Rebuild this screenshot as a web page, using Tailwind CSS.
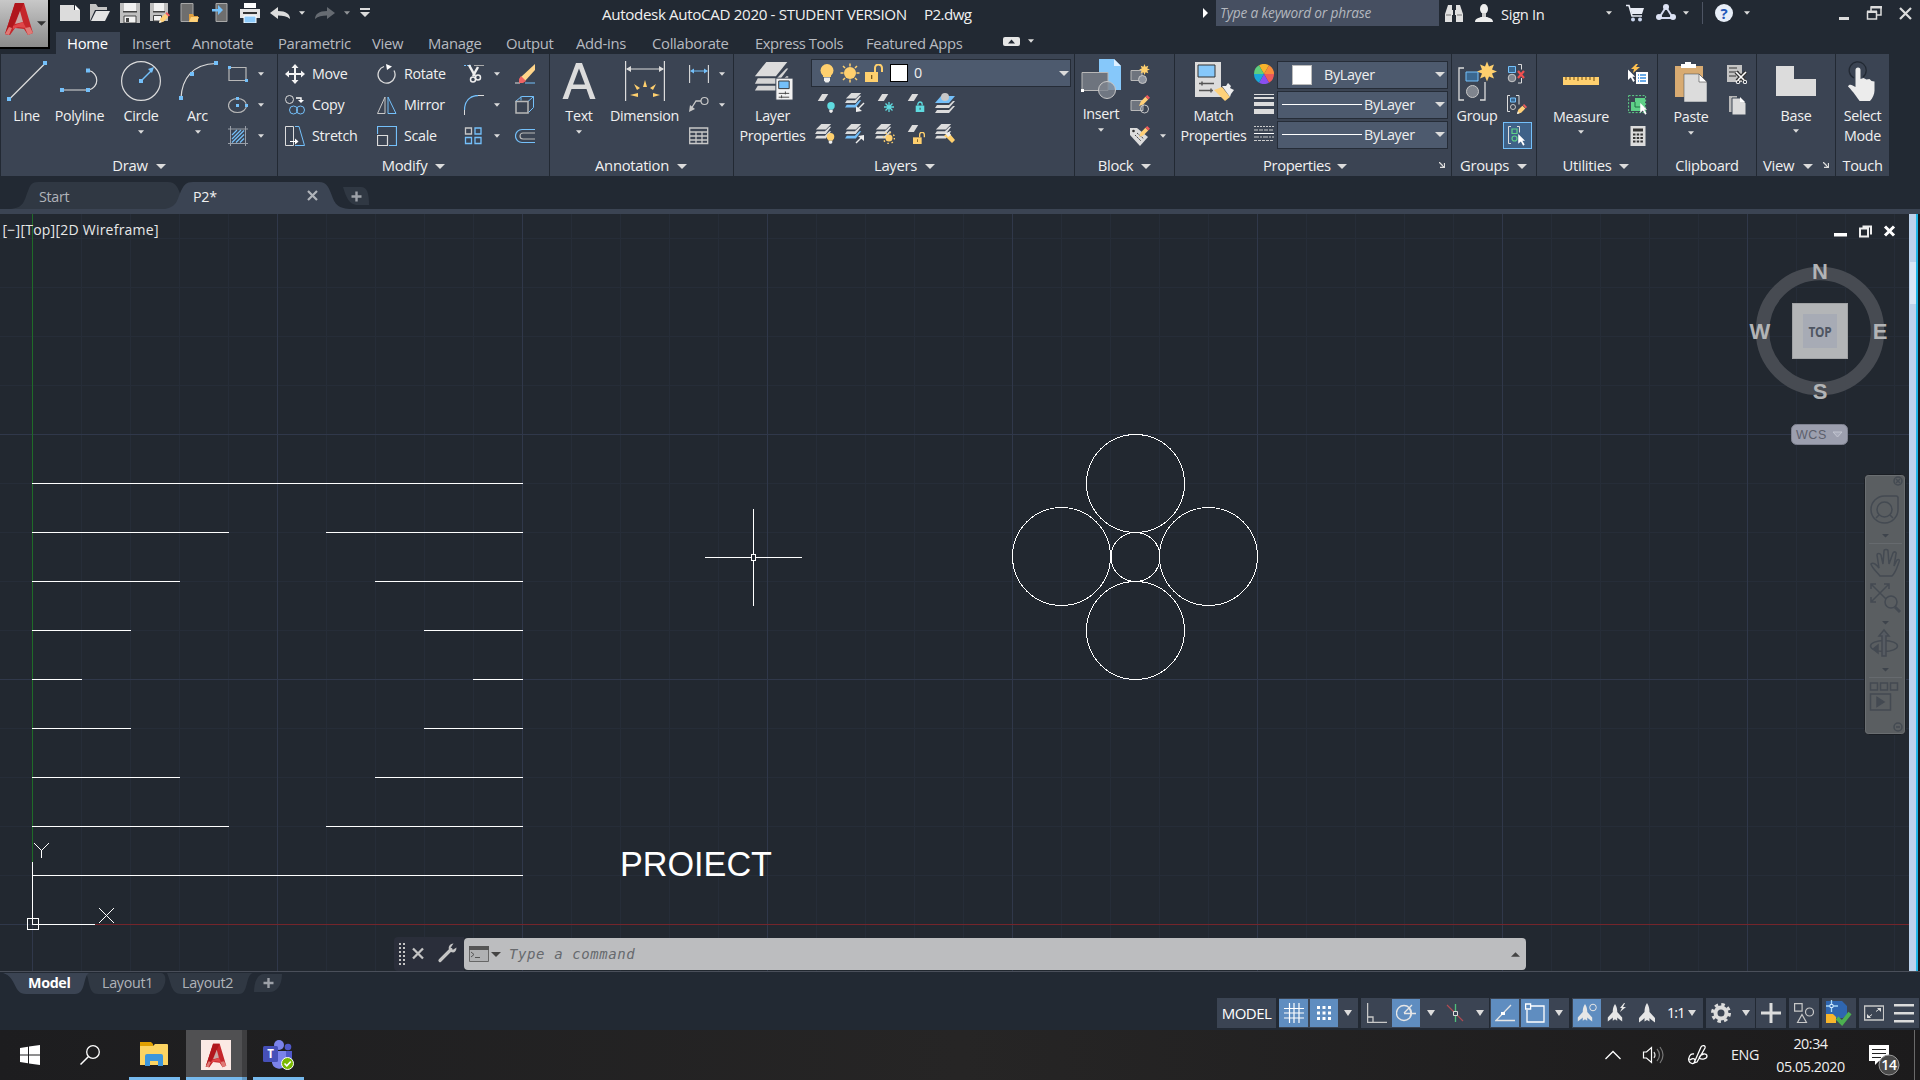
<!DOCTYPE html>
<html lang="en">
<head>
<meta charset="utf-8">
<title>Autodesk AutoCAD 2020</title>
<script src="https://cdn.jsdelivr.net/npm/@tailwindcss/browser@4"></script>
</head>
<body class="w-[1920px] h-[1080px] overflow-hidden bg-[#222933] font-['Open_Sans',sans-serif] text-[14.3px] leading-5 tracking-[-0.3px] text-[#f0f0f0] flex flex-col">

<svg class="hidden">
  <defs>
    <symbol id="dn" viewBox="0 0 6 4"><path d="M0 0.3h6L3 3.7z" fill="#dcdcdc"/></symbol>
    <symbol id="dnl" viewBox="0 0 10 5"><path d="M0 0h10L5 5z" fill="#dcdcdc"/></symbol>
    <symbol id="corner" viewBox="0 0 6 6"><path d="M0 0l5 5M5.500 1v4.500H1" fill="none" stroke="#dcdcdc" stroke-width="1.3"/></symbol>
    <symbol id="sheet" viewBox="0 0 12 8"><path d="M5 0h7L7 8H0z" fill="#dcdcdc"/></symbol>
    <symbol id="stack" viewBox="0 0 20 20"><path d="M7 0h11l-6 6H1z" fill="#dcdcdc"/><path d="M2 8h9l5-5h2l-6 8H0zM2 13h9l5-5h2l-6 8H0z" fill="#dcdcdc"/></symbol>
    <symbol id="stackb" viewBox="0 0 20 20"><path d="M7 0h11l-6 6H1z" fill="#dcdcdc"/><path d="M2 8h9l5-5h2l-6 8H0z" fill="#dcdcdc"/><path d="M2 13h9l5-5h2l-6 8H0z" fill="#74c0fa"/></symbol>
    <symbol id="bulb" viewBox="0 0 14 19"><circle cx="7" cy="6.5" r="6.5" fill="currentColor"/><path d="M3 10h8v3H3z" fill="currentColor"/><path d="M4 13.5h6v3L8.500 18.500h-3L4 16.500z" fill="#eee"/></symbol>
    <symbol id="lock" viewBox="0 0 14 14"><path d="M1 5h12v9H1z" fill="currentColor"/><path d="M4 5V3a3 3 0 0 1 6 0v2" fill="none" stroke="currentColor" stroke-width="1.800"/><path d="M6.500 8h1.200v3H6.500z" fill="#333"/></symbol>
    <symbol id="unlock" viewBox="0 0 18 18"><path d="M0 8h13v10H0z" fill="#ffd06e"/><path d="M10 8V4a3 3 0 0 1 7 0v4" fill="none" stroke="#ffd06e" stroke-width="2"/><path d="M6 11h1.300v4H6z" fill="#7a5b20"/></symbol>
    <symbol id="pencil" viewBox="0 0 12 12"><path d="M0 12l2-5 5-5 3 3-5 5z" fill="#ffd078"/><path d="M7 2l2-2 3 3-2 2z" fill="#f05a5a"/></symbol>
    <symbol id="pencild" viewBox="0 0 12 12"><path d="M0 12l1.500-5 5-5 3.500 3.500-5 5z" fill="#ffd078"/><path d="M0 12l1-3 2 2z" fill="#f4f4f4"/><path d="M7 1.500L8.500 0 12 3.500 10.500 5z" fill="#f05a5a"/></symbol>
    <symbol id="star" viewBox="-10 -10 20 20"><path d="M0-10l2 5 5-2-2 5 5 2-5 2 2 5-5-2-2 5-2-5-5 2 2-5-5-2 5-2-2-5 5 2z" fill="#ffd06e"/></symbol>
    <symbol id="cursor" viewBox="0 0 10 16"><path d="M0 0l9 9H5.500l3 5-2 1.500-3-5.500L0 13z" fill="#fff"/></symbol>
    <symbol id="annot" viewBox="0 0 20 20"><path d="M10 0c2 3 2.500 6 2.500 9l5.500 6v4.500l-4-3-1.500-1.500v3.500L10 17l-2.500 1.500V15L6 16.500l-4 3V15l5.500-6C7.500 6 8 3 10 0z" fill="#e6e6e6"/></symbol>
    <symbol id="alogo" viewBox="0 0 30 34"><path d="M11 1h9l9 30-5 2-4-6-9-1-5 7-5-1z" fill="#c5262b"/><path d="M11 1h9l-5 11-6 12-4 9-4-1z" fill="#b0161c"/><path d="M11 22l5-13 3 11z" fill="#c9a9a6"/><path d="M9 24l10-4 3 6-8-1-5 2z" fill="#e0474a"/><path d="M1 32l4-7 3 1-3 7zM24 33l-3-7 5-1 3 6z" fill="#e07a76"/></symbol>
  </defs>
</svg>

<!-- Title bar and ribbon tabs -->
<header class="h-[54px] flex shrink-0">
  <div class="w-[50px] h-[49px] shrink-0 border-r-2 border-b-2 border-black bg-linear-to-b from-[#c8c8c8] to-[#8b8b8b] flex items-center">
    <svg class="w-[30px] h-[34px] ml-1 -mt-[10px]"><use href="#alogo"/></svg>
    <svg class="w-[9px] h-[5px] ml-[3px]" viewBox="0 0 10 5"><path d="M0 0h10L5 5z" fill="#333"/></svg>
  </div>
  <div class="flex-1 flex flex-col">
    <div class="h-8 flex">
      <div class="flex w-[552px] pl-[10px] pt-[3px]">
        <svg class="w-5 h-5 mr-[10px]" viewBox="0 0 20 20"><path d="M0 2h14v5h6v11H0z" fill="#dcdcdc"/><path d="M15 2l5 5h-5z" fill="#fff"/></svg>
        <svg class="w-5 h-5 mr-[10px]" viewBox="0 0 20 20"><path d="M0 1h6l2 3h9v3H5L0 18z" fill="#c4c4c4"/><path d="M6 8h14l-5 10H1z" fill="#e4e4e4"/></svg>
        <svg class="w-5 h-5 mr-[10px]" viewBox="0 0 20 20"><path d="M0 0h20v20H0z" fill="#bfbfbf"/><path d="M4 0h12v8H4z" fill="#f2f2f2"/><path d="M3 8h14v1.500H3z" fill="#444"/><path d="M4 13h12v7H4z" fill="#f2f2f2" stroke="#444"/><path d="M6 15h3v4H6z" fill="#444"/></svg>
        <svg class="w-5 h-5 mr-[10px]" viewBox="0 0 20 20"><path d="M0 0h18v18H0z" fill="#bfbfbf"/><path d="M4 0h10v8H4z" fill="#f2f2f2"/><path d="M3 8h12v1.500H3z" fill="#444"/><path d="M3.500 12.500h8v5.500h-8z" fill="#f2f2f2" stroke="#444"/><use href="#pencild" x="9" y="9" width="11" height="11"/></svg>
        <svg class="w-5 h-5 mr-[10px]" viewBox="0 0 20 20"><path d="M1 .5h12v18H1z" fill="#6e6e6e" stroke="#a8a8a8"/><path d="M9 11h4l1 2h4v6H9z" fill="#e0a040"/><path d="M11 14h8l-2 5H9z" fill="#ffd27a"/></svg>
        <svg class="w-5 h-5 mr-[10px]" viewBox="0 0 20 20"><path d="M6 .5h11v18H6z" fill="#6e6e6e" stroke="#a8a8a8"/><path d="M2 6h6V2l5 5-5 5V8.500H2z" fill="#74c0fa"/></svg>
        <svg class="w-5 h-5 mr-[10px]" viewBox="0 0 20 20"><path d="M4 0h12v5H4z" fill="#fff"/><path d="M0 6h20v9H0z" fill="#e4e4e4"/><path d="M3 9h14v2H3z" fill="#333"/><path d="M4 13h12v7H4z" fill="#8ecbfb" stroke="#fff"/></svg>
        <svg class="w-5 h-5 mr-[9px]" viewBox="0 0 20 20"><path d="M0 10l8-6v4c8 0 12 3 12 8-3-3-7-3.500-12-3.500V16z" fill="#dcdcdc"/></svg>
        <svg class="w-[6px] h-1 mt-2 mr-[10px]"><use href="#dn"/></svg>
        <svg class="w-5 h-5 mr-[9px]" viewBox="0 0 20 20"><path d="M20 10l-8-6v4C4 8 0 11 0 16c3-3 7-3.500 12-3.500V16z" fill="#666b72"/></svg>
        <svg class="w-[6px] h-1 mt-2 mr-[10px] opacity-60"><use href="#dn"/></svg>
        <svg class="w-[10px] h-[9px] mt-[5px]" viewBox="0 0 10 9"><path d="M0 0h10v2H0zM0 4h10L5 9z" fill="#dcdcdc"/></svg>
      </div>
      <div class="w-[322px] pt-1 text-[15.200px] tracking-[-0.37px] whitespace-nowrap">Autodesk AutoCAD 2020 - STUDENT VERSION</div>
      <div class="w-[279px] pt-1 text-[15.200px] tracking-[-0.600px]">P2.dwg</div>
      <svg class="w-[5px] h-[10px] mt-2 mr-2" viewBox="0 0 5 10"><path d="M0 0l5 5-5 5z" fill="#fff"/></svg>
      <div class="w-[223px] h-[26px] bg-[#464f61] italic text-[13.700px] text-[#b4b8bf] pl-1 pt-[3px] tracking-[-0.17px] whitespace-nowrap">Type a keyword or phrase</div>
      <div class="flex pt-1">
        <svg class="w-[18px] h-[18px] ml-[6px]" viewBox="0 0 18 18"><path d="M3 1h4v5h1v5H7v7H0v-8zM15 1h-4v5h-1v5h1v7h7v-8z" fill="#e0e0e0"/><path d="M1 11h5M12 11h5" stroke="#777"/></svg>
        <svg class="w-[18px] h-[18px] ml-3" viewBox="0 0 18 18"><ellipse cx="9" cy="5" rx="4" ry="5" fill="#eee"/><path d="M7 9h4v4H7z" fill="#ccc"/><path d="M0 18c0-4 4-4 6-5h6c2 1 6 1 6 5z" fill="#eee"/></svg>
        <div class="ml-2 w-[105px] text-[14.700px]">Sign In</div>
        <svg class="w-[6px] h-1 mt-[7px]"><use href="#dn"/></svg>
        <svg class="w-[19px] h-[18px] ml-[14px]" viewBox="0 0 19 18"><path d="M0 1.500h3L6 12h10" fill="none" stroke="#e8ecf5" stroke-width="1.600"/><path d="M4 4h14l-2 6H6z" fill="#e8ecf5"/><circle cx="7" cy="15.500" r="2" fill="#cdd8f0"/><circle cx="14" cy="15.500" r="2" fill="#cdd8f0"/></svg>
        <svg class="w-5 h-[18px] ml-[11px]" viewBox="0 0 20 18"><path d="M10 3L3 14h14z" fill="none" stroke="#d5daf0" stroke-width="2"/><circle cx="10" cy="3" r="3" fill="#dde3f5"/><circle cx="3" cy="13" r="3" fill="#dde3f5"/><circle cx="17" cy="13" r="3" fill="#dde3f5"/></svg>
        <svg class="w-[6px] h-1 mt-[7px] ml-[7px]"><use href="#dn"/></svg>
        <div class="w-px h-[22px] -mt-[2px] ml-[13px] bg-[#4d5463]"></div>
        <div class="size-[18px] ml-3 rounded-full bg-[#e8eef8] text-[#2458b8] font-bold text-[15px] leading-[18px] text-center">?</div>
        <svg class="w-[6px] h-1 mt-[7px] ml-[11px]"><use href="#dn"/></svg>
        <svg class="w-[75px] h-5 ml-[89px]" viewBox="1840 4 75 20"><path d="M1840 17h10v3h-10z" fill="#dcdcdc"/><path d="M1868.500 12h9v7h-9zM1872 11V7h10v8h-4" fill="none" stroke="#dcdcdc" stroke-width="1.500"/><path d="M1868 10.500h10v2.500h-10zM1872 6h11v2.500h-11z" fill="#dcdcdc"/><path d="M1901 8l11 11M1912 8l-11 11" stroke="#dcdcdc" stroke-width="2.200"/></svg>
      </div>
    </div>
    <nav class="h-[22px] flex gap-6 pl-[6px] text-[#b7bac0] leading-[22px] whitespace-nowrap text-[14.800px] tracking-[-0.28px]">
      <div class="w-16 h-[22px] bg-[#3b4453] text-white pl-[11px] -mr-3">Home</div>
      <div class="w-9">Insert</div>
      <div class="w-[62px]">Annotate</div>
      <div class="w-[70px]">Parametric</div>
      <div class="w-8">View</div>
      <div class="w-[54px]">Manage</div>
      <div class="w-[46px]">Output</div>
      <div class="w-[52px]">Add-ins</div>
      <div class="w-[79px]">Collaborate</div>
      <div class="w-[87px] tracking-[-0.45px]">Express Tools</div>
      <div class="w-[96px]">Featured Apps</div>
      <div class="flex items-center gap-2 pl-[17px] h-[18px]">
        <svg class="w-[17px] h-[9px]" viewBox="0 0 17 9"><rect width="17" height="9" rx="2" fill="#e6e6e6"/><path d="M5 6.500L8.500 2.500l3.500 4z" fill="#222933"/></svg>
        <svg class="w-[6px] h-1"><use href="#dn"/></svg>
      </div>
    </nav>
  </div>
</header>

<!-- Ribbon -->
<section class="h-[122px] shrink-0 flex gap-px pl-px whitespace-nowrap">
  <!-- Draw -->
  <div class="w-[276px] bg-[#3b4453] flex flex-col">
    <div class="h-[97px] flex pl-[3px] pt-[4px]">
      <div class="w-[46px] flex flex-col items-center pt-[3px]"><svg class="size-10" viewBox="0 0 40 40"><path d="M2.500 38L39 1.500" stroke="#dcdcdc" stroke-width="1.200"/><path d="M0 36h4v4H0zM36 0h4v4h-4z" fill="#74c0fa"/></svg><span class="mt-[5px] pr-[1px]">Line</span></div>
      <div class="w-[59px] flex flex-col items-center pt-[3px]"><svg class="size-10" viewBox="0 0 40 40"><path d="M3 29h26a10 10 0 0 0 0-19.500" fill="none" stroke="#dcdcdc" stroke-width="1.200"/><path d="M0 27h4v4H0zM26 27h4v4h-4zM26 7.500h4v4h-4z" fill="#74c0fa"/></svg><span class="mt-[5px]">Polyline</span></div>
      <div class="w-[64px] flex flex-col items-center pt-[3px]"><svg class="size-10" viewBox="0 0 40 40"><circle cx="20" cy="20" r="19.400" fill="none" stroke="#dcdcdc" stroke-width="1.200"/><path d="M20 20l11-11" stroke="#74c0fa" stroke-width="1.400"/><path d="M18 18h4v4h-4zM33 6l-2 6-4-4z" fill="#74c0fa"/></svg><span class="mt-[5px]">Circle</span><svg class="w-[6px] h-1 mt-1"><use href="#dn"/></svg></div>
      <div class="w-[49px] flex flex-col items-center pt-[3px]"><svg class="size-10" viewBox="0 0 40 40"><path d="M3 37C4 18 14 3 38 2.500" fill="none" stroke="#dcdcdc" stroke-width="1.200"/><path d="M1 35h4v4H1zM12 11h4v4h-4zM36 0h4v4h-4z" fill="#74c0fa"/></svg><span class="mt-[5px]">Arc</span><svg class="w-[6px] h-1 mt-1"><use href="#dn"/></svg></div>
      <div class="grid grid-cols-[30px_6px] grid-rows-[31px_31px_31px] items-center pl-[6px]">
        <svg class="size-5" viewBox="0 0 20 20"><path d="M1 3.500h17v13H1z" fill="none" stroke="#b8b8b8" stroke-width="1.200"/><path d="M0 2h3v3H0zM17 15h3v3h-3z" fill="#74c0fa"/></svg><svg class="w-[6px] h-1"><use href="#dn"/></svg>
        <svg class="size-5" viewBox="0 0 20 20"><ellipse cx="9.500" cy="10.500" rx="9" ry="7" fill="none" stroke="#b8b8b8" stroke-width="1.200"/><path d="M8 2h3v3H8zM8 9h3v3H8zM17 9h3v3h-3z" fill="#74c0fa"/></svg><svg class="w-[6px] h-1"><use href="#dn"/></svg>
        <svg class="size-5" viewBox="0 0 20 20"><path d="M0 3h20M0 17.500h20M2.500 0v20M17.500 0v20" stroke="#999fa8"/><path d="M4 9l5-5M4 13l9-9M4 16.500L16 4.500M8 16.500l8-8M12 16.500l4-4" stroke="#74c0fa" stroke-width="1.200"/></svg><svg class="w-[6px] h-1"><use href="#dn"/></svg>
      </div>
    </div>
    <div class="h-[25px] pt-[3px] flex items-center justify-center gap-2 text-[14.800px]">Draw<svg class="w-[10px] h-[5px] mt-[2px]"><use href="#dnl"/></svg></div>
  </div>
  <!-- Modify -->
  <div class="w-[271px] bg-[#3b4453] flex flex-col">
    <div class="h-[97px] grid grid-cols-[27px_65px_27px_60px_30px_21px_20px] grid-rows-[31px_31px_31px] items-center pl-[7px] pt-[4px]">
      <svg class="size-5" viewBox="0 0 20 20"><path d="M10 0l3.500 4H11v5h5V6.500l4 3.500-4 3.500V11h-5v5h2.500L10 20l-3.500-4H9v-5H4v2.500L0 10l4-3.500V9h5V4H6.500z" fill="#f4f4f4"/></svg><span>Move</span>
      <svg class="size-5" viewBox="0 0 20 20"><path d="M7 2.500a8.500 8.500 0 1 0 10 4" fill="none" stroke="#dcdcdc" stroke-width="1.300"/><path d="M9 0l6 2.500-5 3.500z" fill="#fff"/></svg><span>Rotate</span>
      <svg class="size-5" viewBox="0 0 20 20"><path d="M0 1.500h7" stroke="#74c0fa" stroke-dasharray="2 1"/><path d="M10 1.500h10" stroke="#aaa"/><path d="M5 1l6 11M14 3l-5 9" stroke="#eee" stroke-width="2.500"/><circle cx="9" cy="15.500" r="2.500" fill="none" stroke="#eee" stroke-width="1.500"/><circle cx="14" cy="13.500" r="2.500" fill="none" stroke="#eee" stroke-width="1.500"/></svg><svg class="w-[6px] h-1"><use href="#dn"/></svg>
      <svg class="size-5" viewBox="0 0 20 20"><path d="M0 19h5" stroke="#dcdcdc"/><path d="M10 19h10" stroke="#74c0fa"/><path d="M20 0v6L10 17l-4-4z" fill="#ffd58a"/><path d="M6 12l5 5-3 2H4v-4z" fill="#f06464"/></svg>
      <svg class="size-5" viewBox="0 0 20 20"><circle cx="4.500" cy="4.500" r="4" fill="none" stroke="#dcdcdc"/><path d="M11 3h5v4" fill="none" stroke="#fff" stroke-width="1.400"/><path d="M13 5h6l-3 3z" fill="#fff"/><circle cx="8.500" cy="15" r="4" fill="none" stroke="#74c0fa"/><circle cx="15.500" cy="15" r="4" fill="none" stroke="#74c0fa"/></svg><span>Copy</span>
      <svg class="size-5" viewBox="0 0 20 20"><path d="M8 2v16.500H.500z" fill="none" stroke="#c8c8c8"/><path d="M11 2v16.500h8z" fill="none" stroke="#74c0fa"/></svg><span>Mirror</span>
      <svg class="size-5" viewBox="0 0 20 20"><path d="M.5 20v-5M14 .5h6" stroke="#dcdcdc"/><path d="M.5 15C.500 6 6 .500 14 .500" fill="none" stroke="#74c0fa" stroke-width="1.300"/></svg><svg class="w-[6px] h-1"><use href="#dn"/></svg>
      <svg class="size-5" viewBox="0 0 20 20"><path d="M.5 6.500l6-5h12v11l-5 5M13 6.500l5.500-5M6 1.500v4" fill="none" stroke="#74c0fa"/><path d="M1 6.500h12v11.500H1z" fill="none" stroke="#b8b8b8" stroke-width="1.500"/></svg>
      <svg class="size-5" viewBox="0 0 20 20"><path d="M.5.500h8v19h-8z" fill="none" stroke="#dcdcdc"/><path d="M10 .500h4l5.500 19H10" fill="none" stroke="#74c0fa"/><path d="M5 15.500h6" stroke="#fff"/><path d="M10 12.500l3.500 3-3.500 3z" fill="#fff"/></svg><span>Stretch</span>
      <svg class="size-5" viewBox="0 0 20 20"><path d="M.5 8V.500h19v19H12" fill="none" stroke="#74c0fa" stroke-width="1.200"/><path d="M.5 9.500h10v10H.5z" fill="none" stroke="#dcdcdc" stroke-width="1.200"/></svg><span>Scale</span>
      <svg class="size-5" viewBox="0 0 20 20"><path d="M1.500 2h6v6h-6z" fill="none" stroke="#c8c8c8" stroke-width="1.300"/><path d="M11 2h6v6h-6zM1.500 11.500h6v6h-6zM11 11.500h6v6h-6z" fill="none" stroke="#74c0fa" stroke-width="1.300"/></svg><svg class="w-[6px] h-1"><use href="#dn"/></svg>
      <svg class="size-5" viewBox="0 0 20 20"><path d="M20 3.500H7a6.500 6.500 0 0 0 0 13h13" fill="none" stroke="#74c0fa" stroke-width="1.200"/><path d="M20 7H8a3 3 0 0 0 0 6h12" fill="none" stroke="#b8b8b8" stroke-width="1.200"/></svg>
    </div>
    <div class="h-[25px] pt-[3px] flex items-center justify-center gap-2 text-[14.800px]">Modify<svg class="w-[10px] h-[5px] mt-[2px]"><use href="#dnl"/></svg></div>
  </div>
  <!-- Annotation -->
  <div class="w-[183px] bg-[#3b4453] flex flex-col">
    <div class="h-[97px] flex pt-[4px] pl-1">
      <div class="w-[50px] flex flex-col items-center pt-[3px]"><svg class="size-10" viewBox="0 0 40 40"><path d="M17 2h6l13.500 36h-5.500l-3.500-10H12.500L9 38H3.500zM20 7.500L14 23.500h12z" fill="#dcdcdc" fill-rule="evenodd"/></svg><span class="mt-[5px]">Text</span><svg class="w-[6px] h-1 mt-1"><use href="#dn"/></svg></div>
      <div class="w-[81px] flex flex-col items-center pt-[3px]"><svg class="size-10" viewBox="0 0 40 40"><path d="M.6 0v40M39.400 0v40M2 8h36" stroke="#dcdcdc" stroke-width="1.200"/><path d="M1 8l5-3v6zM39 8l-5-3v6z" fill="#dcdcdc"/><path d="M20 19l2 7h-4zM31 23l-3 6-3-2zM9 23l6 4-3 2zM35 34l-7-2v4zM5 34l8-2v4z" fill="#ffd06e"/></svg><span class="mt-[5px]">Dimension</span></div>
      <div class="grid grid-cols-[30px_6px] grid-rows-[31px_31px_31px] items-center pl-1">
        <svg class="size-5" viewBox="0 0 20 20"><path d="M.6 1v18M19.400 1v18" stroke="#dcdcdc" stroke-width="1.100"/><path d="M3 7h14" stroke="#74c0fa"/><path d="M1 7l4-2.500v5zM19 7l-4-2.500v5z" fill="#74c0fa"/></svg><svg class="w-[6px] h-1"><use href="#dn"/></svg>
        <svg class="size-5" viewBox="0 0 20 20"><path d="M2 14l5-8h5" fill="none" stroke="#c8c8c8" stroke-width="1.300"/><circle cx="15.500" cy="6" r="3.500" fill="none" stroke="#c8c8c8" stroke-width="1.200"/><path d="M0 17l1-7 5 4z" fill="#c8c8c8"/></svg><svg class="w-[6px] h-1"><use href="#dn"/></svg>
        <svg class="size-5" viewBox="0 0 20 20"><path d="M.7 2h18v15.500H.7zM.7 6h18M.7 10h18M.7 14h18M7 6v11.500M13 6v11.500" fill="none" stroke="#c8c8c8" stroke-width="1.300"/></svg>
      </div>
    </div>
    <div class="h-[25px] pt-[3px] flex items-center justify-center gap-2 text-[14.800px] pr-px">Annotation<svg class="w-[10px] h-[5px] mt-[2px]"><use href="#dnl"/></svg></div>
  </div>
  <!-- Layers -->
  <div class="w-[340px] bg-[#3b4453] flex flex-col">
    <div class="h-[97px] flex pt-[4px]">
      <div class="w-[77px] flex flex-col items-center pt-[3px]"><svg class="w-10 h-10" viewBox="0 0 42 40"><path d="M14 0h22L24 15H2z" fill="#dcdcdc"/><path d="M5 17h20L35 7h2L25 23H2zM5 25h20L35 15h2v8L25 30H2z" fill="#d4d4d4"/><path d="M24 17h18v23H24z" fill="#f2f2f2" stroke="#3b4453"/><path d="M27 20h11v8H27z" fill="#74c0fa" stroke="#333"/><path d="M27 33h11M27 37h11M34 31v3M30 35v3" stroke="#444"/></svg><span class="mt-[5px]">Layer</span><span>Properties</span></div>
      <div>
        <div class="w-[260px] h-[28px] mt-px flex items-center bg-[#4d5a6e] border border-[#252c37] pl-[8px]">
          <svg class="w-[14px] h-[19px] text-[#ffd06e]"><use href="#bulb"/></svg>
          <svg class="w-[20px] h-5 ml-[6px]" viewBox="-10 -10 20 20"><circle r="6" fill="#ffd06e"/><path d="M0-9.500v3M0 6.500v3M-9.500 0h3M6.500 0h3M-7-7l2 2M7-7L5-5M-7 7l2-2M7 7L5 5" stroke="#ffd06e" stroke-width="1.500"/></svg>
          <svg class="w-[18px] h-[18px] ml-[5px]"><use href="#unlock"/></svg>
          <div class="size-[18px] border border-black bg-white ml-[7px]"></div>
          <span class="ml-[6px] flex-1">0</span>
          <svg class="w-[10px] h-[5px] mr-[1px]"><use href="#dnl"/></svg>
        </div>
        <div class="grid grid-cols-[30px_30px_30px_30px_30px] grid-rows-[31px_31px] items-center pl-1">
          <svg class="size-5" viewBox="0 0 20 20"><use href="#sheet" y="1" width="16" height="7"/><use href="#bulb" x="12" y="9" width="8" height="11" class="text-[#5fdbe0]"/></svg>
          <svg class="size-5" viewBox="0 0 20 20"><use href="#stackb" width="18" height="18"/><path d="M19 10l-6 6" stroke="#eee" stroke-width="1.500"/><path d="M11 19v-6l6 5z" fill="#eee"/></svg>
          <svg class="size-5" viewBox="0 0 20 20"><use href="#sheet" y="1" width="16" height="7"/><path d="M9 14h10M14 9v10M10.500 10.500l7 7M17.500 10.500l-7 7" stroke="#5fdbe0" stroke-width="1.300"/></svg>
          <svg class="size-5" viewBox="0 0 20 20"><use href="#sheet" y="1" width="16" height="7"/><use href="#lock" x="10" y="8" width="10" height="12" class="text-[#5fdbe0]"/></svg>
          <svg class="size-5" viewBox="0 0 20 20"><path d="M6 3h14l-6 7H0z" fill="#74c0fa"/><circle cx="10" cy="4" r="4" fill="#c8c8c8"/><path d="M2 12h12l4-4h2l-6 7H0zM2 17h12l4-4h2l-6 7H0z" fill="#dcdcdc"/></svg>
          <svg class="size-5" viewBox="0 0 20 20"><use href="#stack" width="18" height="18"/><use href="#bulb" x="11" y="9" width="9" height="11" class="text-[#ffd06e]"/></svg>
          <svg class="size-5" viewBox="0 0 20 20"><use href="#stackb" width="18" height="18"/><path d="M11 19l6-6" stroke="#eee" stroke-width="1.500"/><path d="M19 11v6l-6-5z" fill="#eee"/></svg>
          <svg class="size-5" viewBox="0 0 20 20"><use href="#stack" width="18" height="18"/><circle cx="14" cy="14" r="3.500" fill="#ffd06e"/><circle cx="14" cy="14" r="5.500" fill="none" stroke="#ffd06e" stroke-width="1.500" stroke-dasharray="1.500 2.800"/></svg>
          <svg class="size-5" viewBox="0 0 20 20"><use href="#sheet" y="1" width="16" height="7"/><use href="#unlock" x="8" y="8" width="12" height="12"/></svg>
          <svg class="size-5" viewBox="0 0 20 20"><use href="#stack" width="18" height="18"/><path d="M12 9l2 3 1-2 5 6-3 3-5-5-3-2z" fill="#ffd06e"/><path d="M10 9l4-1 2 3-3 2z" fill="#eee"/></svg>
        </div>
      </div>
    </div>
    <div class="h-[25px] pt-[3px] flex items-center justify-center gap-2 text-[14.800px] pl-px">Layers<svg class="w-[10px] h-[5px] mt-[2px]"><use href="#dnl"/></svg></div>
  </div>
  <!-- Block -->
  <div class="w-[99px] bg-[#3b4453] flex flex-col">
    <div class="h-[97px] flex pt-[4px]">
      <div class="w-[52px] flex flex-col items-center pt-[1px]"><svg class="w-10 h-10" viewBox="0 0 40 40"><path d="M18 0h15l7 7v24H18z" fill="#86c8fa"/><path d="M33 0l7 7h-7z" fill="#dff0ff"/><path d="M1 13.500h26v18H1z" fill="#6e747e" stroke="#b8b8b8"/><circle cx="26" cy="31" r="8.500" fill="#7e848e" fill-opacity=".8" stroke="#c8c8c8"/><path d="M0 30h3v3H0z" fill="#fff"/></svg><span class="mt-[5px]">Insert</span><svg class="w-[6px] h-1 mt-1"><use href="#dn"/></svg></div>
      <div class="grid grid-cols-[30px_6px] grid-rows-[31px_31px_31px] items-center pl-[3px]">
        <svg class="size-5" viewBox="0 0 20 20"><path d="M1 6.500h11v10H1z" fill="#6e747e" stroke="#b8b8b8"/><circle cx="12.500" cy="15.500" r="4" fill="#8e949e" stroke="#c8c8c8"/><use href="#star" x="9" y="0" width="11" height="11"/></svg><span></span>
        <svg class="size-5" viewBox="0 0 20 20"><path d="M1 5.500h12v10H1z" fill="#6e747e" stroke="#b8b8b8"/><circle cx="14.500" cy="14" r="4" fill="none" stroke="#c8c8c8"/><use href="#pencil" x="9" y="0" width="11" height="11"/></svg><span></span>
        <svg class="size-5" viewBox="0 0 20 20"><path d="M0 2h7l11 9-8 9L0 9z" fill="#dcdcdc"/><circle cx="3.500" cy="5" r="1.300" fill="#333"/><path d="M5 9l6 6M7 7l7 6" stroke="#444" stroke-dasharray="2 1"/><use href="#pencil" x="9" y="0" width="11" height="11"/></svg><svg class="w-[6px] h-1"><use href="#dn"/></svg>
      </div>
    </div>
    <div class="h-[25px] pt-[3px] flex items-center justify-center gap-2 text-[14.800px]">Block<svg class="w-[10px] h-[5px] mt-[2px]"><use href="#dnl"/></svg></div>
  </div>
  <!-- Properties -->
  <div class="w-[276px] bg-[#3b4453] flex flex-col">
    <div class="h-[97px] flex pt-[4px]">
      <div class="w-[77px] flex flex-col items-center pt-[3px]"><svg class="size-10" viewBox="0 0 40 40"><path d="M1 1h26v35H1z" fill="#dcdcdc"/><path d="M4 4h17v12H4z" fill="#86c8fa" stroke="#333"/><path d="M5 22.500h15M5 29.500h14M8 20.500v4M17 27.500v4" stroke="#555" stroke-width="1.500"/><path d="M20 29l8-3 8 10-5 4z" fill="#ffd27a"/><path d="M28 25l4 0 2-3 3 3-1 2 4 2-3 4-1 3z" fill="#eee"/></svg><span class="mt-[5px]">Match</span><span>Properties</span></div>
      <div class="grid grid-cols-[23px_171px] grid-rows-[30px_30px_30px] pt-px pl-[2px] items-center">
        <svg class="size-5" viewBox="-10 -10 20 20"><path d="M0 0L-5-8.700A10 10 0 0 1 5-8.700z" fill="#f7b32b"/><path d="M0 0L5-8.700A10 10 0 0 1 10 0z" fill="#fa8c3c"/><path d="M0 0h10A10 10 0 0 1 5 8.700z" fill="#ee5a5a"/><path d="M0 0L5 8.700A10 10 0 0 1-5 8.700z" fill="#8a4ff0"/><path d="M0 0L-5 8.700A10 10 0 0 1-10 0z" fill="#19a8d8"/><path d="M0 0h-10A10 10 0 0 1-5-8.700z" fill="#5fcf7e"/></svg>
        <div class="h-[28px] mt-px flex items-center bg-[#4d5a6e] border border-[#252c37] pl-[14px]"><div class="size-[20px] bg-white border border-[#bbb]"></div><span class="ml-3 flex-1">ByLayer</span><svg class="w-[10px] h-[5px] mr-[2px]"><use href="#dnl"/></svg></div>
        <svg class="size-5" viewBox="0 0 20 20"><path d="M0 0h20v1H0zM0 3h20v2H0zM0 8h20v4H0zM0 15h20v5H0z" fill="#dcdcdc"/></svg>
        <div class="h-[28px] mt-px flex items-center bg-[#4d5a6e] border border-[#252c37] pl-[4px]"><div class="w-20 h-px bg-white"></div><span class="ml-[2px] flex-1">ByLayer</span><svg class="w-[10px] h-[5px] mr-[2px]"><use href="#dnl"/></svg></div>
        <svg class="size-5" viewBox="0 0 20 20"><path d="M0 2.500h20" stroke="#ccc" stroke-dasharray="2 1"/><path d="M0 6h20" stroke="#ccc" stroke-dasharray="4 1"/><path d="M0 9.500h20" stroke="#fff"/><path d="M0 13h20" stroke="#ccc" stroke-dasharray="5 1 2 1"/><path d="M0 16.500h20" stroke="#ccc" stroke-dasharray="3 1"/></svg>
        <div class="h-[28px] mt-px flex items-center bg-[#4d5a6e] border border-[#252c37] pl-[4px]"><div class="w-20 h-px bg-white"></div><span class="ml-[2px] flex-1">ByLayer</span><svg class="w-[10px] h-[5px] mr-[2px]"><use href="#dnl"/></svg></div>
      </div>
    </div>
    <div class="h-[25px] pt-[3px] flex items-center text-[14.800px] tracking-[-0.4px] pl-[88px]"><span class="w-[74px]">Properties</span><svg class="w-[10px] h-[5px] mt-[2px]"><use href="#dnl"/></svg><svg class="size-[6px] ml-auto mr-[6px]"><use href="#corner"/></svg></div>
  </div>
  <!-- Groups -->
  <div class="w-[84px] bg-[#3b4453] flex flex-col">
    <div class="h-[97px] flex pt-[4px]">
      <div class="w-[50px] flex flex-col items-center pt-[3px]"><svg class="w-10 h-10 ml-[2px]" viewBox="0 0 40 40"><path d="M6 7H1v32h5M22 39h5V21" fill="none" stroke="#dcdcdc" stroke-width="1.300"/><path d="M8 11h12v9H8z" fill="#3a678f" stroke="#74c0fa"/><circle cx="14.500" cy="30.500" r="6" fill="#80858e" stroke="#c8c8c8"/><use href="#star" x="19" y="0" width="20" height="21"/></svg><span class="mt-[5px]">Group</span></div>
      <div class="grid grid-cols-[30px] grid-rows-[31px_31px_31px] items-center justify-items-center">
        <svg class="size-5" viewBox="0 0 20 20"><path d="M11 .5h3.500v5M14.500 14v5H11" fill="none" stroke="#dcdcdc"/><path d="M1.500 2.500h7v6h-7z" fill="#3a678f" stroke="#74c0fa"/><circle cx="5" cy="14" r="3.800" fill="#80858e" stroke="#c8c8c8"/><path d="M11 7l6 7M17 7l-6 7" stroke="#f05050" stroke-width="2.200"/></svg>
        <svg class="size-5" viewBox="0 0 20 20"><path d="M3 .5H.500v16H3M9 .5h3v9" fill="none" stroke="#dcdcdc"/><path d="M3.500 3h5v4h-5z" fill="#3a678f" stroke="#74c0fa"/><circle cx="6" cy="12" r="2.500" fill="none" stroke="#c8c8c8"/><use href="#pencild" x="10" y="9" width="10" height="10"/></svg>
        <div class="w-[29px] h-[27px] bg-[#3f6288] border border-[#74c0fa] flex items-center justify-center"><svg class="size-5" viewBox="0 0 20 20"><path d="M4 .5H1.500v17H4M10 .5h2.500v6" fill="none" stroke="#dcdcdc"/><path d="M5 3h5v4.500H5zM7.500 10a2.500 2.500 0 1 1 0 5 2.500 2.500 0 1 1 0-5" fill="none" stroke="#5fd088" stroke-width="1.200"/><use href="#cursor" x="11" y="8" width="8" height="12"/></svg></div>
      </div>
    </div>
    <div class="h-[25px] pt-[3px] flex items-center justify-center gap-2 text-[14.800px] pr-px">Groups<svg class="w-[10px] h-[5px] mt-[2px]"><use href="#dnl"/></svg></div>
  </div>
  <!-- Utilities -->
  <div class="w-[120px] bg-[#3b4453] flex flex-col">
    <div class="h-[97px] flex pt-[4px]">
      <div class="w-[88px] flex flex-col items-center pt-[3px]"><svg class="size-10" viewBox="0 0 40 40"><path d="M2 16h36v8H2z" fill="#ffd06e"/><path d="M5 16v3M9 16v3M13 16v3M17 16v4M21 16v3M25 16v3M29 16v3M33 16v4" stroke="#8a6420" stroke-width="1.200"/></svg><span class="mt-[6px]">Measure</span><svg class="w-[6px] h-1 mt-[3px]"><use href="#dn"/></svg></div>
      <div class="grid grid-rows-[31px_31px_31px] items-center pl-[3px]">
        <svg class="size-5" viewBox="0 0 20 20"><path d="M8 0L3 5h3l-1 4 7-6H8l2-3z" fill="#ffc04e"/><path d="M8 8h12v12H8z" fill="#fff"/><path d="M12 11h6M12 14h6M12 17h6M10 11h1M10 14h1M10 17h1" stroke="#3a8fe0" stroke-width="1.300"/><use href="#cursor" x="0" y="5" width="8" height="14"/></svg>
        <svg class="size-5" viewBox="0 0 20 20"><path d="M.6.600h17v17H.6z" fill="none" stroke="#5fd088" stroke-dasharray="2 1.500"/><path d="M3 7h4V3h10v9h-4v4H3z" fill="#5fd088"/><path d="M7 7v5h6" fill="none" stroke="#1e6e42"/><use href="#cursor" x="12" y="8" width="8" height="12"/></svg>
        <svg class="size-5" viewBox="0 0 20 20"><path d="M2.500 0h15v20h-15z" fill="#dcdcdc"/><path d="M5 2.500h10v3H5z" fill="#333"/><path d="M5 8.500h10M5 12h10M5 15.500h10" stroke="#333" stroke-width="2.200" stroke-dasharray="2.500 1.200"/></svg>
      </div>
    </div>
    <div class="h-[25px] pt-[3px] flex items-center justify-center gap-2 text-[14.800px] pr-[2px]">Utilities<svg class="w-[10px] h-[5px] mt-[2px]"><use href="#dnl"/></svg></div>
  </div>
  <!-- Clipboard -->
  <div class="w-[98px] bg-[#3b4453] flex flex-col">
    <div class="h-[97px] flex pt-[4px]">
      <div class="w-[66px] flex flex-col items-center pt-[4px]"><svg class="size-10" viewBox="0 0 40 40"><path d="M4 4h28v31H4z" fill="#d8ab72"/><path d="M10 2h4V0h6v2h5v4H10z" fill="#fff"/><path d="M13 12h15l8 8v20H13z" fill="#dcdcdc" stroke="#3b4453" stroke-width=".5"/><path d="M28 12l8 8h-8z" fill="#fff" stroke="#444" stroke-width=".6"/></svg><span class="mt-[5px]">Paste</span><svg class="w-[6px] h-1 mt-1"><use href="#dn"/></svg></div>
      <div class="grid grid-rows-[31px_31px_31px] items-center pl-[3px]">
        <svg class="size-5" viewBox="0 0 20 20"><path d="M0 1h15v17H0z" fill="#c4c4c4"/><path d="M2 4h8M2 8h10M2 12h7" stroke="#333"/><path d="M9 8l9 9M19 8l-9 9" stroke="#333" stroke-width="4"/><path d="M9 8l8 8M19 8l-8 8" stroke="#fff" stroke-width="1.600"/><circle cx="11" cy="18" r="1.800" fill="none" stroke="#fff"/><circle cx="18" cy="18" r="1.800" fill="none" stroke="#fff"/></svg>
        <svg class="size-5" viewBox="0 0 20 20"><path d="M2 1h8v16H2z" fill="#b8b8b8"/><path d="M5 3h8l6 5v12H5z" fill="#dcdcdc" stroke="#3b4453"/><path d="M13 2l5 5h-5z" fill="#fff"/></svg>
      </div>
    </div>
    <div class="h-[25px] pt-[3px] flex items-center justify-center text-[14.600px]">Clipboard</div>
  </div>
  <!-- View -->
  <div class="w-[78px] bg-[#3b4453] flex flex-col">
    <div class="h-[97px] flex flex-col items-center pt-[7px]"><svg class="size-10" viewBox="0 0 40 40"><path d="M0 5h18v13h22v17H0z" fill="#dcdcdc"/></svg><span class="mt-[5px]">Base</span><svg class="w-[6px] h-1 mt-[3px]"><use href="#dn"/></svg></div>
    <div class="h-[25px] pt-[3px] flex items-center pl-[6px] text-[14.800px]"><span class="w-10">View</span><svg class="w-[10px] h-[5px] mt-[2px]"><use href="#dnl"/></svg><svg class="size-[6px] ml-auto mr-[6px]"><use href="#corner"/></svg></div>
  </div>
  <!-- Touch -->
  <div class="w-[53px] bg-[#3b4453] flex flex-col">
    <div class="h-[97px] flex flex-col items-center pt-[7px]"><svg class="size-10" viewBox="-2 0 40 40"><path d="M9 17a8.500 8.500 0 1 1 9-1" fill="none" stroke="#222933" stroke-width="1.300"/><path d="M10.500 26V9a2.300 2.300 0 0 1 5 0v9l3-1 3 1.500 3-.5 2 2 3 .5v9c0 4-2 8-5 11H15c-3-4-6-9-12-15 1-3 4-2 7.500.5z" fill="#ececec"/></svg><span class="mt-[5px]">Select</span><span>Mode</span></div>
    <div class="h-[25px] pt-[3px] flex items-center justify-center text-[14.600px]">Touch</div>
  </div>
</section>

<!-- File tabs -->
<div class="h-[38px] shrink-0 relative border-b-[5px] border-[#3b4453]">
  <svg class="absolute inset-0 w-[400px] h-[33px]" viewBox="0 0 400 33"><path d="M10 33c14-1 14-8 18-18 2-6 4-9 10-9h130c8 0 10 6 13 14l4 13z" fill="#303843"/><path d="M165 33c12-2 12-9 16-18 3-6 5-9 12-9h126c8 0 10 6 13 14 3 8 6 13 20 13z" fill="#3b4453"/><path d="M343 11h18c6 0 8 6 8 18h-13c-7-1-10-8-13-18z" fill="#303843"/><path d="M308 15l9 9M317 15l-9 9" stroke="#b0b4ba" stroke-width="2.200"/><path d="M356.500 15.500v10M351.500 20.500h10" stroke="#9da1a8" stroke-width="2.400"/></svg>
  <div class="relative flex pt-[11px] pl-[39px]"><span class="w-[154px] text-[#b0b4ba]">Start</span><span>P2*</span></div>
</div>

<!-- Drawing canvas -->
<main class="h-[757px] shrink-0 relative bg-[#222830]">
  <svg class="w-[1920px] h-[757px]" viewBox="0 214 1920 757">
    <defs>
      <pattern id="minor" x="32" y="924" width="49" height="49" patternUnits="userSpaceOnUse"><path d="M0 .5h49M.5 0v49" stroke="#262d38"/></pattern>
      <pattern id="major" x="32" y="924" width="245" height="245" patternUnits="userSpaceOnUse"><path d="M0 .5h245M.5 0v245" stroke="#30384a"/></pattern>
    </defs>
    <rect y="214" width="1909" height="757" fill="url(#minor)"/>
    <rect y="214" width="1909" height="757" fill="url(#major)"/>
    <path d="M32.500 214v710" stroke="#1f6b28"/>
    <path d="M32 924.500h1877" stroke="#74252b"/>
    <g stroke="#fff" fill="none" shape-rendering="crispEdges">
      <path d="M32 483.500h491M32 532.500h197M326 532.500h197M32 581.500h148M375 581.500h148M32 630.500h99M424 630.500h99M32 679.500h50M473 679.500h50M32 728.500h99M424 728.500h99M32 777.500h148M375 777.500h148M32 826.500h197M326 826.500h197M32 875.500h491"/>
      <circle cx="1135.500" cy="557" r="24.500"/><circle cx="1135.500" cy="483.500" r="49"/><circle cx="1135.500" cy="630.500" r="49"/><circle cx="1061.500" cy="556.500" r="49"/><circle cx="1208.500" cy="556.500" r="49"/>
      <path d="M705 557.500h46M756 557.500h46M753.500 509v45M753.500 561v45M751.500 554.500h4v6h-4z"/>
      <path d="M32.500 862v63M32 924.500h63M27.500 918.500h11v11h-11z"/>
      <path d="M34 843l7 7v8M49 843l-7.500 7.500M99 908l15 15M114 908l-15 15"/>
    </g>
    <text x="620" y="876" font-family="Liberation Sans" font-size="35" fill="#fff" textLength="152" lengthAdjust="spacingAndGlyphs" letter-spacing="0">PROIECT</text>
    <text x="2.500" y="234.500" font-family="Open Sans" font-size="14" fill="#e8e8e8" textLength="156" letter-spacing="0">[−][Top][2D Wireframe]</text>
    <path d="M1834 233h13v3.500h-13z" fill="#fff"/>
    <path d="M1860 228.500h8v8h-8zM1862.500 226.500h8.500v8" fill="none" stroke="#eee" stroke-width="2"/>
    <path d="M1885 226.500l9 9M1894 226.500l-9 9" stroke="#fff" stroke-width="3"/>
    <!-- View cube -->
    <circle cx="1820" cy="331" r="57.500" fill="none" stroke="#474b52" stroke-width="13.500"/>
    <g font-family="Liberation Sans" font-weight="bold" font-size="22" fill="#b2b4b6" text-anchor="middle" letter-spacing="0"><text x="1820" y="279">N</text><text x="1820" y="399">S</text><text x="1760" y="339">W</text><text x="1880" y="339">E</text></g>
    <rect x="1792.500" y="303.500" width="55" height="55" fill="#b3b5b7" stroke="#a0a2a4"/>
    <rect x="1803" y="314" width="34" height="34" fill="#a7abb5"/>
    <text x="1820" y="336.500" font-family="Open Sans" font-weight="bold" font-size="15" fill="#4e5561" text-anchor="middle" textLength="23" lengthAdjust="spacingAndGlyphs">TOP</text>
    <rect x="1791.500" y="424.500" width="56" height="20" rx="5" fill="#9c9fae" stroke="#7f8290"/>
    <text x="1796" y="439" font-family="Liberation Sans" font-size="12.500" fill="#5c606c" textLength="30">WCS</text>
    <path d="M1833 432h9l-4.500 5z" fill="#a8abba" stroke="#c2c5d0"/>
    <!-- Navigation bar -->
    <rect x="1864.500" y="474.500" width="41" height="260" rx="4" fill="#5a5e61" stroke="#1a1e24"/>
    <rect x="1865.500" y="475.500" width="39" height="258" rx="3" fill="none" stroke="#6a6e71"/>
    <g fill="none" stroke="#444a52" stroke-width="1.500">
      <circle cx="1898" cy="481" r="4"/><path d="M1896 479l4 4M1900 479l-4 4"/>
      <path d="M1898 497v12a13.500 13.500 0 1 1-13.500-13H1896q2 0 2 2z"/><circle cx="1884.500" cy="509.500" r="7.500"/><path d="M1876 518l3-3M1893 518l-3-3"/>
      <path d="M1880 576c-3-4-8-8-9-12 2-2 5 0 8 4l-2-13c0-2 3-2 4 0l2 9 1-13c0-2 4-2 4 0l1 13 4-11c1-2 4-1 3 1l-2 12 3-6c2-1 3 0 2 2-2 5-3 10-7 14z"/>
      <path d="M1871 584l18 18M1889 584l-18 18M1871 589v-5h5M1884 584h5v5M1871 597v5h5"/><circle cx="1891" cy="602" r="6" fill="#5a5e61"/><path d="M1895 607l5 5" stroke-width="3"/>
      <ellipse cx="1884" cy="646" rx="13.500" ry="5.500"/><path d="M1882 656v-20h-3l5-6 5 6h-3v20z" fill="#565b62"/><path d="M1873 649l5-4v8z" fill="#444a52"/>
      <path d="M1870.500 683h7v7h-7zM1880.500 683h7v7h-7zM1890.500 683h7v7h-7zM1870.500 694h20v16h-20z"/><path d="M1877 697.500l7 4.500-7 4.500z" fill="#444a52"/>
      <circle cx="1898" cy="727" r="4"/><path d="M1896 727h4"/>
    </g>
    <path d="M1882 534h7l-3.500 3.500zM1882 621h7l-3.500 3.500zM1882 668h7l-3.500 3.500z" fill="#3e444c"/>
    <path d="M1869 543.500h33M1869 677.500h33" stroke="#666a6e"/>
    <!-- Window behind the right edge -->
    <rect x="1909" y="214" width="7" height="757" fill="#bcd2ec"/><rect x="1910" y="262" width="6" height="42" fill="#d8e6f6"/>
    <rect x="1916" y="214" width="2" height="757" fill="#1fb6e6"/><rect x="1918" y="214" width="2" height="757" fill="#14181d"/>
  </svg>
  <!-- Command line -->
  <div class="absolute left-[394px] top-[723px] w-[1132px] h-[34px] flex">
    <div class="w-[70px] bg-[#2a2e3a] rounded-l flex items-center">
      <svg class="w-[70px] h-[34px]" viewBox="394 937 70 34"><path d="M400 943v22M404 943v22" stroke="#c4c4c4" stroke-width="2" stroke-dasharray="2 2"/><path d="M413 948.500l10 10M423 948.500l-10 10" stroke="#c4c4c4" stroke-width="2.300"/><path d="M440 960.500l11-11" stroke="#c4c4c4" stroke-width="3.200" stroke-linecap="round"/><path d="M453.500 943.500c-4 0-6 4-4 7s7 3 7-3l-4 2.500-2-2z" fill="#c4c4c4"/></svg>
    </div>
    <div class="flex-1 h-8 mt-px rounded-sm bg-[#bcbdbf] flex items-center pl-[5px] pr-[6px]">
      <svg class="w-5 h-4" viewBox="0 0 20 16"><path d="M.5.500h19v15H.5z" fill="#b0b1b3" stroke="#666"/><path d="M0 0h20v4H0z" fill="#555"/><path d="M2 6l3 2.500L2 11M6 11.500h5" fill="none" stroke="#555"/></svg>
      <svg class="w-[10px] h-[5px] ml-[2px]" viewBox="0 0 10 5"><path d="M0 0h10L5 5z" fill="#444"/></svg>
      <span class="font-['DejaVu_Sans_Mono',monospace] italic text-[14px] tracking-[0.600px] text-[#66696d] ml-[8px] flex-1">Type a command</span>
      <svg class="w-[9px] h-[5px]" viewBox="0 0 10 5"><path d="M0 5h10L5 0z" fill="#444"/></svg>
    </div>
  </div>
</main>

<!-- Layout tabs and status bar -->
<footer class="h-[59px] shrink-0 border-t border-[#4a4f5a] flex flex-col relative">
  <svg class="absolute top-0 left-0 w-[300px] h-[23px]" viewBox="0 0 300 23"><path d="M86 1h75c8 0 5 21-8 21H98c-10 0-8-14-12-21z" fill="#303843"/><path d="M167 1h86c-8 2-4 21-14 21h-58c-10 0-10-12-14-21z" fill="#303843"/><path d="M3 1h86c-6 3-3 21-14 21H26c-13 0-9-17-23-21z" fill="#3b4453"/><path d="M264 2h18c0 12-6 18-12 18h-16c0-11 4-18 10-18z" fill="#303843"/><path d="M268.500 6v10M263.500 11h10" stroke="#9da1a8" stroke-width="2.400"/></svg>
  <div class="relative flex h-[26px] pl-7 pt-[1px] text-[#b0b4ba]"><span class="w-[74px] font-bold text-white text-[14.300px] tracking-[-0.35px]">Model</span><span class="w-[80px]">Layout1</span><span>Layout2</span></div>
  <div class="h-[30px] flex pl-[1217px] text-[#dcdcdc]">
    <div class="w-[59px] bg-[#3b4453] text-center leading-[30px] mr-[3px] text-[15px] text-white tracking-[-0.5px]">MODEL</div>
    <div class="w-[79px] bg-[#3b4453] flex items-center mr-[3px]">
      <div class="w-[29px] h-7 bg-[#5f8dc0] mr-[2px] flex items-center justify-center"><svg class="size-5" viewBox="0 0 20 20"><path d="M0 5.500h20M0 10h20M0 15h20M5.500 0v20M10 0v20M15 0v20" stroke="#fff" stroke-width="1.200"/></svg></div>
      <div class="w-[28px] h-7 bg-[#5f8dc0] flex items-center justify-center"><svg class="size-5" viewBox="0 0 20 20"><path d="M3 4.500h14M3 10h14M3 15.500h14" stroke="#fff" stroke-width="3" stroke-dasharray="3 2.500"/></svg></div>
      <svg class="w-2 h-[6px] ml-[6px]" viewBox="0 0 8 6"><path d="M0 0h8L4 6z" fill="#dcdcdc"/></svg>
    </div>
    <div class="w-[128px] bg-[#3b4453] flex items-center mr-[1px]">
      <div class="w-[31px] flex justify-center"><svg class="size-5" viewBox="0 0 20 20"><path d="M.6 0v19.400H20M1 14h5v5" fill="none" stroke="#c8c8c8" stroke-width="1.300"/></svg></div>
      <div class="w-[28px] h-7 bg-[#5f8dc0] flex items-center justify-center"><svg class="size-5" viewBox="0 0 20 20"><circle cx="8" cy="10" r="7.500" fill="none" stroke="#e6e6e6" stroke-width="1.300"/><path d="M8 10.500h12M8 10l8-8M13 5c2 3 2 7 1 9" fill="none" stroke="#e6e6e6" stroke-width="1.300"/></svg></div>
      <svg class="w-2 h-[6px] ml-[7px]" viewBox="0 0 8 6"><path d="M0 0h8L4 6z" fill="#dcdcdc"/></svg>
      <svg class="size-5 ml-[11px]" viewBox="0 0 20 20"><path d="M1 2l7 7M11 12l6 6" stroke="#b04a52" stroke-width="1.200"/><path d="M9.500 1v8M9.500 12v7" stroke="#4fc07a" stroke-width="1.300"/><path d="M7.500 8.500h4v4h-4z" fill="none" stroke="#dcdcdc"/></svg>
      <svg class="w-2 h-[6px] ml-[10px]" viewBox="0 0 8 6"><path d="M0 0h8L4 6z" fill="#dcdcdc"/></svg>
    </div>
    <div class="w-[79px] bg-[#3b4453] flex items-center mr-[3px] pl-px">
      <div class="w-[28px] h-7 bg-[#5f8dc0] mr-[2px] flex items-center justify-center"><svg class="size-5" viewBox="0 0 20 20"><path d="M16 2L1 17.500h19" fill="none" stroke="#e6e6e6" stroke-width="1.300"/><path d="M6 9h4v3H6z" fill="#fff"/></svg></div>
      <div class="w-[28px] h-7 bg-[#5f8dc0] flex items-center justify-center"><svg class="size-5" viewBox="0 0 20 20"><path d="M6 3h13v16H2V7M.600 1h5v5h-5z" fill="none" stroke="#fff" stroke-width="1.300"/></svg></div>
      <svg class="w-2 h-[6px] ml-[6px]" viewBox="0 0 8 6"><path d="M0 0h8L4 6z" fill="#dcdcdc"/></svg>
    </div>
    <div class="w-[131px] bg-[#3b4453] flex items-center mr-[3px] pl-px">
      <div class="w-[28px] h-7 bg-[#5f8dc0] flex items-center justify-center"><svg class="size-5" viewBox="0 0 20 20"><use href="#annot" width="18" height="20" x="-1"/><circle cx="16" cy="4.500" r="3.300" fill="none" stroke="#e6e6e6"/></svg></div>
      <svg class="size-5 ml-[6px]" viewBox="0 0 20 20"><use href="#annot" width="18" height="20" x="-1"/><path d="M17 0l-4 5h2l-2 4 6-5h-3l2-4z" fill="#e6e6e6"/></svg>
      <svg class="size-5 ml-[10px]"><use href="#annot"/></svg>
      <span class="w-[21px] ml-[10px] tracking-[-0.8px] text-white">1:1</span>
      <svg class="w-2 h-[6px]" viewBox="0 0 8 6"><path d="M0 0h8L4 6z" fill="#dcdcdc"/></svg>
    </div>
    <div class="w-[49px] bg-[#3b4453] flex items-center mr-px pl-[5px]">
      <svg class="size-5" viewBox="-10 -10 20 20"><circle r="5.500" fill="none" stroke="#dcdcdc" stroke-width="4"/><circle r="8.500" fill="none" stroke="#dcdcdc" stroke-width="3" stroke-dasharray="3.500 3.180"/></svg>
      <svg class="w-2 h-[6px] ml-[11px]" viewBox="0 0 8 6"><path d="M0 0h8L4 6z" fill="#dcdcdc"/></svg>
    </div>
    <div class="w-[30px] bg-[#3b4453] flex items-center justify-center mr-[3px]"><svg class="size-5" viewBox="0 0 20 20"><path d="M0 8.500h20v3H0z M8.500 0h3v20h-3z" fill="#dcdcdc"/></svg></div>
    <div class="w-[30px] bg-[#3b4453] flex items-center justify-center mr-[3px]"><svg class="size-5" viewBox="0 0 20 20"><path d="M.6.600h7.500v7.500H.6zM8 11.500l4.500 8h-9z" fill="none" stroke="#c8c8c8" stroke-width="1.200"/><circle cx="15.500" cy="9" r="4" fill="none" stroke="#c8c8c8" stroke-width="1.200"/></svg></div>
    <div class="w-[34px] bg-[#3b4453] flex items-center pl-1 mr-[3px]"><svg class="w-[26px] h-[26px]" viewBox="0 0 26 26"><path d="M0 1h16l5 5v9l-4 3H9l-2-4H0z" fill="#2f66b0"/><path d="M0 14h7l3 3v6H0z" fill="#f7b52c"/><path d="M5.500 0v12M0 6h12" stroke="#a8d8f8" stroke-width="1.300"/><path d="M4 4.500h3v3H4z" fill="#2f66b0" stroke="#cfe8fb"/><path d="M11 18l5 5 8-10" fill="none" stroke="#4caf50" stroke-width="4"/></svg></div>
    <div class="w-[60px] bg-[#3b4453] flex items-center pl-[5px]"><svg class="w-5 h-5" viewBox="0 0 20 20"><path d="M.6 3h19v14H.6z" fill="none" stroke="#c8c8c8" stroke-width="1.300"/><path d="M12 8.500l4-3M8 11.500l-4 3" stroke="#dcdcdc"/><path d="M17 5v4l-4-4zM3 15v-4l4 4z" fill="#dcdcdc"/></svg><svg class="w-5 h-5 ml-[10px]" viewBox="0 0 20 20"><path d="M0 1h20v2.500H0zM0 9h20v2.500H0zM0 17h20v2.500H0z" fill="#dcdcdc"/></svg></div>
  </div>
</footer>

<!-- Taskbar -->
<div class="h-[50px] shrink-0 bg-linear-to-r from-[#1d1d1f] via-[#262525] to-[#1c1b1c] flex">
  <div class="w-[60px] flex items-center justify-center"><svg class="size-5" viewBox="0 0 20 20"><path d="M0 3l8-1.200V9.500H0zM9 1.600L20 0v9.500H9zM0 10.500h8v7.700L0 17zM9 10.500h11V20L9 18.400z" fill="#fff"/></svg></div>
  <div class="w-[69px] flex items-center pl-5"><svg class="size-5" viewBox="0 0 20 20"><circle cx="13" cy="7" r="6.300" fill="none" stroke="#fff" stroke-width="1.300"/><path d="M8.500 11.500L.500 19.500" stroke="#fff" stroke-width="1.500"/></svg></div>
  <div class="w-[51px] border-b-[3px] border-[#76b9ed] flex items-center pl-[11px] mr-[6px]"><svg class="w-7 h-6" viewBox="0 0 28 24"><path d="M0 0h11l2 2v4H0z" fill="#e0a000"/><path d="M0 4h13l2-2h12q1 0 1 1v20H0z" fill="#fcd462"/><path d="M5 24V14q0-2 2-2h14q2 0 2 2v10h-5v-5h-8v5z" fill="#3c96dc"/></svg></div>
  <div class="w-[56px] border-b-[3px] border-[#76b9ed] bg-[#505052] flex items-center justify-center pl-[4px] pt-[3px]"><div class="size-[30px] bg-[#fbe9e4] flex items-center justify-center"><svg class="w-[22px] h-[25px]"><use href="#alogo"/></svg></div></div>
  <div class="w-[5px] border-b-[3px] border-[#5f95c0] bg-[#3e3e40] mr-[6px]"></div>
  <div class="w-[51px] border-b-[3px] border-[#76b9ed] flex items-center pl-[10px] pt-[3px]"><svg class="w-[31px] h-[30px]" viewBox="0 0 31 30"><circle cx="16" cy="5" r="5" fill="#7b83eb"/><circle cx="25" cy="7" r="3.300" fill="#5059c9"/><path d="M19 11h10v8a6 6 0 0 1-10 5z" fill="#5059c9"/><path d="M9 11h14v9a7 7 0 0 1-14 3z" fill="#7b83eb"/><rect y="6" width="15" height="16" rx="1.500" fill="#4650b8"/><circle cx="24.500" cy="23.500" r="6" fill="#7ab800" stroke="#fff"/><path d="M21.500 23.500l2.300 2.300 4-4.300" fill="none" stroke="#fff" stroke-width="1.600"/><text x="7.500" y="18" font-family="Open Sans" font-size="11.500" font-weight="bold" fill="#fff" text-anchor="middle">T</text></svg></div>
  <div class="flex-1"></div>
  <svg class="w-[103px] h-[50px] mr-[23px]" viewBox="1605 1030 103 50"><path d="M1605.500 1059l7.500-7.500 7.500 7.500" fill="none" stroke="#fff" stroke-width="1.300"/><path d="M1643.500 1052h3l5-4.500v15l-5-4.500h-3z" fill="none" stroke="#fff" stroke-width="1.200"/><path d="M1654 1052q2 3 0 6" fill="none" stroke="#ddd" stroke-width="1.200"/><path d="M1657 1049q5 6 0 12M1660 1047q6 8 0 16" fill="none" stroke="#777" stroke-width="1.200"/><path d="M1694 1054c-4-1-6 4-5 7s6 4 6 0-4-2-5-1M1694 1063l7-16c1-2 5-2 4 1l-8 14zM1699 1058c2-5 8-5 8-2s-5 4-8 2" fill="none" stroke="#fff" stroke-width="1.300"/></svg>
  <div class="w-[43px] leading-[50px] tracking-[-0.400px]">ENG</div>
  <div class="w-[73px] text-center leading-[23px] pt-[2px] tracking-[-0.450px]">20:34<br>05.05.2020</div>
  <svg class="w-[45px] h-[50px] ml-[22px]" viewBox="1869 1030 45 50"><path d="M1869 1045h20v16h-10l-4 4v-4h-6z" fill="#fff"/><path d="M1872 1049.500h14M1872 1053.500h14M1872 1057.500h9" stroke="#222"/><circle cx="1889" cy="1065" r="10" fill="#4a4a4a" stroke="#999"/><text x="1889" y="1070" font-family="Open Sans" font-size="14" font-weight="600" fill="#fff" text-anchor="middle">14</text></svg>
  <div class="w-px bg-[#6a6a6a] mr-[5px]"></div>
</div>
</body>
</html>
